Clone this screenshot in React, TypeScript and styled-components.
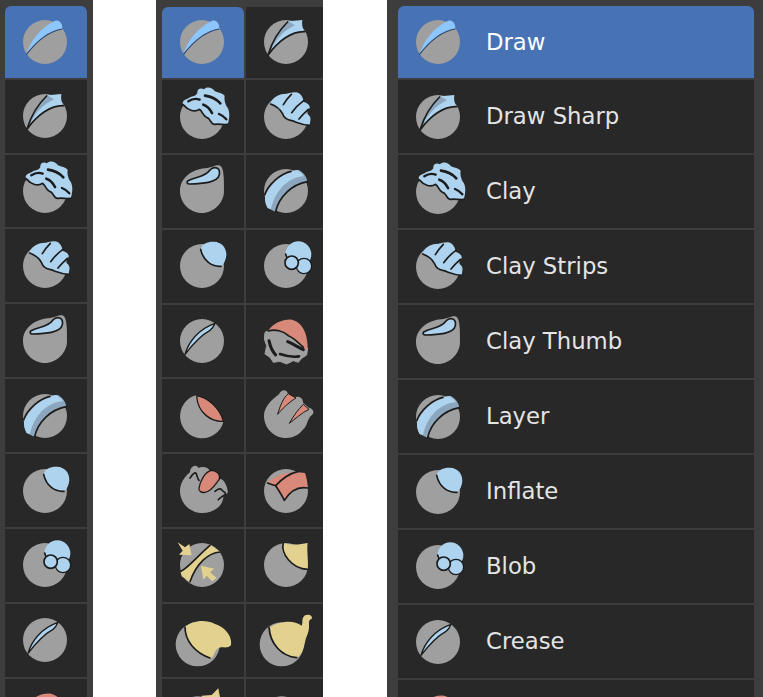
import React from 'react';
import styled, { createGlobalStyle } from 'styled-components';

const G = '#9f9f9f';
const B = '#aed3ee';
const D = '#8ba6bd';
const H = '#8cc6fc';
const S = '#d9897a';
const Y = '#e3d28f';
const K = '#1c1c1c';

const Global = createGlobalStyle`
  html, body { margin: 0; padding: 0; background: #fff; height: 697px; overflow: hidden; }
`;

const Page = styled.div`
  display: flex;
  align-items: stretch;
  height: 697px;
  width: 763px;
  overflow: hidden;
  font-family: "DejaVu Sans", "Liberation Sans", sans-serif;
`;

const Panel = styled.div<{ $width: number; $left: number; $top: number; $padLeft: number }>`
  box-sizing: border-box;
  flex: none;
  width: ${p => p.$width}px;
  margin-left: ${p => p.$left}px;
  padding: ${p => p.$top}px 0 0 ${p => p.$padLeft}px;
  background: #3d3d3d;
  overflow: hidden;
`;

const Stack = styled.div<{ $cols: string; $first: number; $pitch: number }>`
  display: grid;
  grid-template-columns: ${p => p.$cols};
  grid-template-rows: ${p => p.$first}px;
  grid-auto-rows: ${p => p.$pitch - 2}px;
  gap: 2px;
`;

const Tile = styled.div<{ $on?: boolean; $round?: boolean }>`
  display: flex;
  align-items: center;
  justify-content: center;
  background: ${p => (p.$on ? '#4772b3' : '#282828')};
  border-radius: ${p => (p.$round ? '6px 6px 0 0' : '0')};
`;

const Row = styled.div<{ $on?: boolean; $round?: boolean }>`
  display: flex;
  align-items: center;
  gap: 18px;
  padding-left: 10px;
  background: ${p => (p.$on ? '#4772b3' : '#282828')};
  border-radius: ${p => (p.$round ? '6px 6px 0 0' : '0')};
`;

const Label = styled.span<{ $on?: boolean }>`
  font-size: 22.75px;
  line-height: 1;
  color: ${p => (p.$on ? '#ffffff' : '#e4e4e4')};
`;

const Glyph = styled.svg<{ $nudge?: boolean }>`
  display: block;
  flex: none;
  width: 60px;
  height: 60px;
  margin-left: ${p => (p.$nudge ? '-2px' : '0')};
`;

type Icon = { name: string; c: [number, number]; art: React.ReactNode };

const Ball = ({ x, y }: { x: number; y: number }) => <circle cx={x} cy={y} r={66} fill={G} />;
const Ink = ({ d, w = 5 }: { d: string; w?: number }) => (
  <path d={d} fill="none" stroke={K} strokeWidth={w} strokeLinecap="round" strokeLinejoin="round" />
);

const icons: Icon[] = [
  {
    name: 'Draw',
    c: [141, 128],
    art: (
      <>
        <Ball x={141} y={128} />
        <path d="M85 166C95 128 128 84 170 65C184 60 194 72 193 89C155 95 120 120 85 166Z" fill={H} />
        <path d="M85 166C120 120 155 95 193 89" fill="none" stroke="#2f4468" strokeWidth={3.5} />
      </>
    ),
  },
  {
    name: 'Draw Sharp',
    c: [393, 128],
    art: (
      <>
        <Ball x={393} y={128} />
        <path d="M340 166C350 130 375 90 400 66L442 62C440 75 442 88 449 97C410 95 370 125 340 166Z" fill={B} />
        <path d="M344 160C362 120 385 95 420 78L400 66C375 90 352 125 344 160Z" fill={D} />
        <Ink d="M340 165C352 125 375 90 398 68" />
        <Ink d="M340 166C370 125 410 95 449 97" />
      </>
    ),
  },
  {
    name: 'Clay',
    c: [141, 349],
    art: (
      <>
        <Ball x={141} y={349} />
        <path
          d="M84 312C80 300 92 296 102 292C110 286 122 288 127 278C125 266 136 260 147 266C155 256 172 260 180 272C190 276 202 278 209 285C207 298 210 306 214 316C224 326 226 346 218 371C206 373 192 369 180 371C165 373 168 352 155 350C145 348 143 332 133 326C120 336 100 330 84 312Z"
          fill={B}
        />
        <Ink d="M84 312C100 330 120 336 133 326C143 332 145 348 155 350C168 352 165 372 180 371C192 369 206 373 218 371" />
        <Ink d="M100 302C112 294 122 292 134 297" w={7} />
        <Ink d="M150 285C170 288 185 296 196 308" w={8} />
        <Ink d="M145 312C155 315 165 325 171 337" w={8} />
        <Ink d="M192 340C200 343 208 349 214 356" w={7} />
      </>
    ),
  },
  {
    name: 'Clay Strips',
    c: [393, 349],
    art: (
      <>
        <Ball x={393} y={349} />
        <path
          d="M347 310C350 292 370 282 385 280C400 280 410 274 424 275C438 278 444 290 446 304C456 306 466 314 464 322L453 338C462 342 469 350 466 360L464 374L435 372C425 364 405 362 392 356C385 348 382 335 372 328C365 322 355 314 347 310Z"
          fill={B}
        />
        <Ink d="M347 310C360 315 375 325 382 338C386 350 395 358 410 360C425 364 435 372 464 374" />
        <Ink d="M385 312C392 300 400 290 409 281" />
        <Ink d="M410 336C420 322 432 310 446 300" />
        <Ink d="M432 355C440 345 450 335 460 326" />
      </>
    ),
  },
  {
    name: 'Clay Thumb',
    c: [141, 574],
    art: (
      <>
        <path
          d="M75 574C75 535 110 510 150 506C170 504 180 497 190 497C203 497 208 515 207 574C207 610 175 640 141 640C105 640 75 610 75 574Z"
          fill={G}
        />
        <path
          d="M98 544C120 530 148 535 165 511C178 497 197 505 193 525C188 550 140 552 102 553C96 552 95 548 98 544Z"
          fill={B}
          stroke={K}
          strokeWidth={5}
        />
      </>
    ),
  },
  {
    name: 'Layer',
    c: [393, 574],
    art: (
      <>
        <Ball x={393} y={574} />
        <path d="M330 592C345 552 385 518 430 510C445 518 455 530 457 546C420 552 378 580 362 637L338 625C332 615 329 600 330 592Z" fill={D} />
        <path d="M330 592C345 552 385 518 425 511C436 516 444 524 447 530C405 532 362 566 348 628L338 625C332 615 329 600 330 592Z" fill={B} />
        <Ink d="M362 636C372 590 410 555 457 546" />
        <Ink d="M329 585C340 555 375 522 408 515" />
      </>
    ),
  },
  {
    name: 'Inflate',
    c: [141, 110],
    art: (
      <>
        <Ball x={141} y={110} />
        <path d="M137 60C140 42 160 36 177 37C200 38 215 55 214 78C213 92 207 104 198 111C175 113 145 95 137 60Z" fill={B} />
        <Ink d="M137 60C145 95 170 113 198 111" />
      </>
    ),
  },
  {
    name: 'Blob',
    c: [393, 110],
    art: (
      <>
        <Ball x={393} y={110} />
        <circle cx={430} cy={75} r={39} fill={B} />
        <Ink d="M392 74C394 82 396 88 400 90" />
        <circle cx={447} cy={110} r={23} fill={B} stroke={K} strokeWidth={4} />
        <circle cx={410} cy={100} r={20} fill={B} stroke={K} strokeWidth={5} />
      </>
    ),
  },
  {
    name: 'Crease',
    c: [141, 336],
    art: (
      <>
        <Ball x={141} y={336} />
        <path d="M180 281L208 300L195 275Z" fill="#282828" />
        <path d="M90 376C100 340 130 300 180 283C176 293 172 299 165 304C135 320 110 350 90 376Z" fill={B} stroke={K} strokeWidth={4} strokeLinejoin="round" />
      </>
    ),
  },
  {
    name: 'Smooth',
    c: [393, 336],
    art: (
      <>
        <path
          d="M340 305L330 310L328 330L335 350L330 375L345 385L355 400L375 397L395 405L415 395L430 400L440 388L455 378L458 358L400 310Z"
          fill={G}
          stroke={G}
          strokeWidth={3}
          strokeLinejoin="round"
        />
        <path d="M340 305C355 282 385 270 410 272C440 278 460 312 458 364L445 355C430 340 415 325 400 320C385 305 360 300 340 305Z" fill={S} />
        <Ink d="M340 306C360 300 385 305 400 320C415 325 430 340 445 355" />
        <Ink d="M342 335C345 350 350 365 362 378" w={9} />
        <Ink d="M398 338C415 345 430 355 445 362" w={9} />
        <Ink d="M375 375C395 382 415 385 432 382" w={8} />
      </>
    ),
  },
  {
    name: 'Flatten',
    c: [141, 560],
    art: (
      <>
        <path d="M125 497A66 66 0 1 0 205 578Z" fill={G} />
        <path d="M125 499C155 503 195 535 205 576C170 578 128 552 125 499Z" fill={S} stroke={K} strokeWidth={4} strokeLinejoin="round" />
      </>
    ),
  },
  {
    name: 'Fill',
    c: [393, 560],
    art: (
      <>
        <path
          d="M327 560C327 535 345 515 372 495C378 480 395 478 398 492L418 505C430 498 445 505 444 520L462 535C475 538 480 550 470 558C455 570 458 590 445 600C430 618 415 626 393 626C355 626 327 595 327 560Z"
          fill={G}
        />
        <path d="M368 555C375 530 385 505 400 493L423 506C400 520 380 540 368 555Z" fill={S} stroke={K} strokeWidth={3} strokeLinejoin="round" />
        <path d="M403 582C415 560 430 540 445 525L462 540C440 550 420 570 403 582Z" fill={S} stroke={K} strokeWidth={3} strokeLinejoin="round" />
      </>
    ),
  },
  {
    name: 'Scrape',
    c: [141, 124],
    art: (
      <>
        <path
          d="M75 124C75 100 90 80 105 68C105 50 125 42 130 55C140 50 160 50 165 65L190 90C205 80 220 115 218 130L205 140C205 170 175 190 141 190C105 190 75 160 75 124Z"
          fill={G}
        />
        <path d="M132 115C135 95 150 65 170 62C185 62 198 75 192 90C180 105 170 125 150 128C140 130 130 125 132 115Z" fill={S} stroke={K} strokeWidth={4} />
        <Ink d="M105 85C110 78 116 68 122 70C128 75 125 85 132 92" />
        <Ink d="M180 125C188 118 195 115 200 120C205 128 215 128 210 135C200 140 195 145 190 150" />
      </>
    ),
  },
  {
    name: 'Multi-plane Scrape',
    c: [393, 124],
    art: (
      <>
        <Ball x={393} y={124} />
        <path d="M338 100C355 80 395 62 450 70C455 85 458 100 458 115C430 110 405 125 388 152C380 135 370 120 362 108Z" fill={S} />
        <Ink d="M338 100C345 104 355 106 362 108C370 120 380 135 388 152C405 125 430 110 458 115" />
        <Ink d="M362 108C380 88 400 72 430 65" />
      </>
    ),
  },
  {
    name: 'Pinch',
    c: [141, 351],
    art: (
      <>
        <Ball x={141} y={351} />
        <path d="M76 370C100 360 140 310 165 290L197 312C160 315 125 345 105 403L80 385Z" fill={Y} />
        <Ink d="M78 370C100 360 140 312 165 292" />
        <Ink d="M105 401C125 345 160 315 195 312" />
        <path d="M68 283L90 298L103 288L110 322L72 320L83 308Z" fill={Y} />
        <path d="M138 353L178 362L165 373L185 390L172 400L155 383L145 395Z" fill={Y} />
      </>
    ),
  },
  {
    name: 'Grab',
    c: [393, 351],
    art: (
      <>
        <Ball x={393} y={351} />
        <path d="M380 305L385 285C410 292 435 290 458 285C455 305 460 330 458 362C430 365 395 345 380 305Z" fill={Y} />
        <Ink d="M385 285C376 315 410 362 458 364" />
      </>
    ),
  },
  {
    name: 'Elastic Deform',
    c: [141, 573],
    art: (
      <>
        <Ball x={128} y={586} />
        <path d="M90 535C110 515 150 510 180 525C210 535 232 560 228 588C220 600 205 592 190 597C175 605 178 630 165 627C125 615 95 590 90 535Z" fill={Y} />
        <Ink d="M90 535C90 575 120 612 165 627" />
      </>
    ),
  },
  {
    name: 'Snake Hook',
    c: [393, 573],
    art: (
      <>
        <Ball x={380} y={586} />
        <path d="M345 535C370 518 415 510 440 530C445 520 438 508 450 499C462 494 474 500 470 510C455 512 468 530 458 555C445 580 452 610 425 626C385 620 350 590 345 535Z" fill={Y} />
        <Ink d="M342 535C345 585 380 622 425 626" />
      </>
    ),
  },
  {
    name: 'Thumb',
    c: [141, 798],
    art: (
      <>
        <Ball x={128} y={808} />
        <path d="M140 740L170 738L190 718L195 745L195 790L140 790Z" fill={Y} />
      </>
    ),
  },
  {
    name: 'Pose',
    c: [393, 798],
    art: <Ball x={380} y={808} />,
  },
];

const BrushIcon = ({ icon, nudge }: { icon: Icon; nudge?: boolean }) => (
  <Glyph $nudge={nudge} viewBox={`${icon.c[0] - 90} ${icon.c[1] - 90} 180 180`}>
    {icon.art}
  </Glyph>
);

const single = icons.slice(0, 10);

export default function App() {
  return (
    <>
      <Global />
      <Page>
        <Panel $width={93} $left={0} $top={5.7} $padLeft={5}>
          <Stack $cols="82px" $first={72} $pitch={74.9}>
            {single.map((icon, i) => (
              <Tile key={icon.name} $on={i === 0} $round={i === 0}>
                <BrushIcon icon={icon} nudge />
              </Tile>
            ))}
          </Stack>
        </Panel>
        <Panel $width={167} $left={63} $top={6.7} $padLeft={6}>
          <Stack $cols="82px 82px" $first={71.5} $pitch={74.8}>
            {icons.map((icon, i) => (
              <Tile key={icon.name} $on={i === 0} $round={i === 0}>
                <BrushIcon icon={icon} nudge />
              </Tile>
            ))}
          </Stack>
        </Panel>
        <Panel $width={376} $left={64} $top={6} $padLeft={11}>
          <Stack $cols="356px" $first={72} $pitch={75}>
            {single.map((icon, i) => (
              <Row key={icon.name} $on={i === 0} $round={i === 0}>
                <BrushIcon icon={icon} />
                <Label $on={i === 0}>{icon.name === 'Smooth' ? '' : icon.name}</Label>
              </Row>
            ))}
          </Stack>
        </Panel>
      </Page>
    </>
  );
}
